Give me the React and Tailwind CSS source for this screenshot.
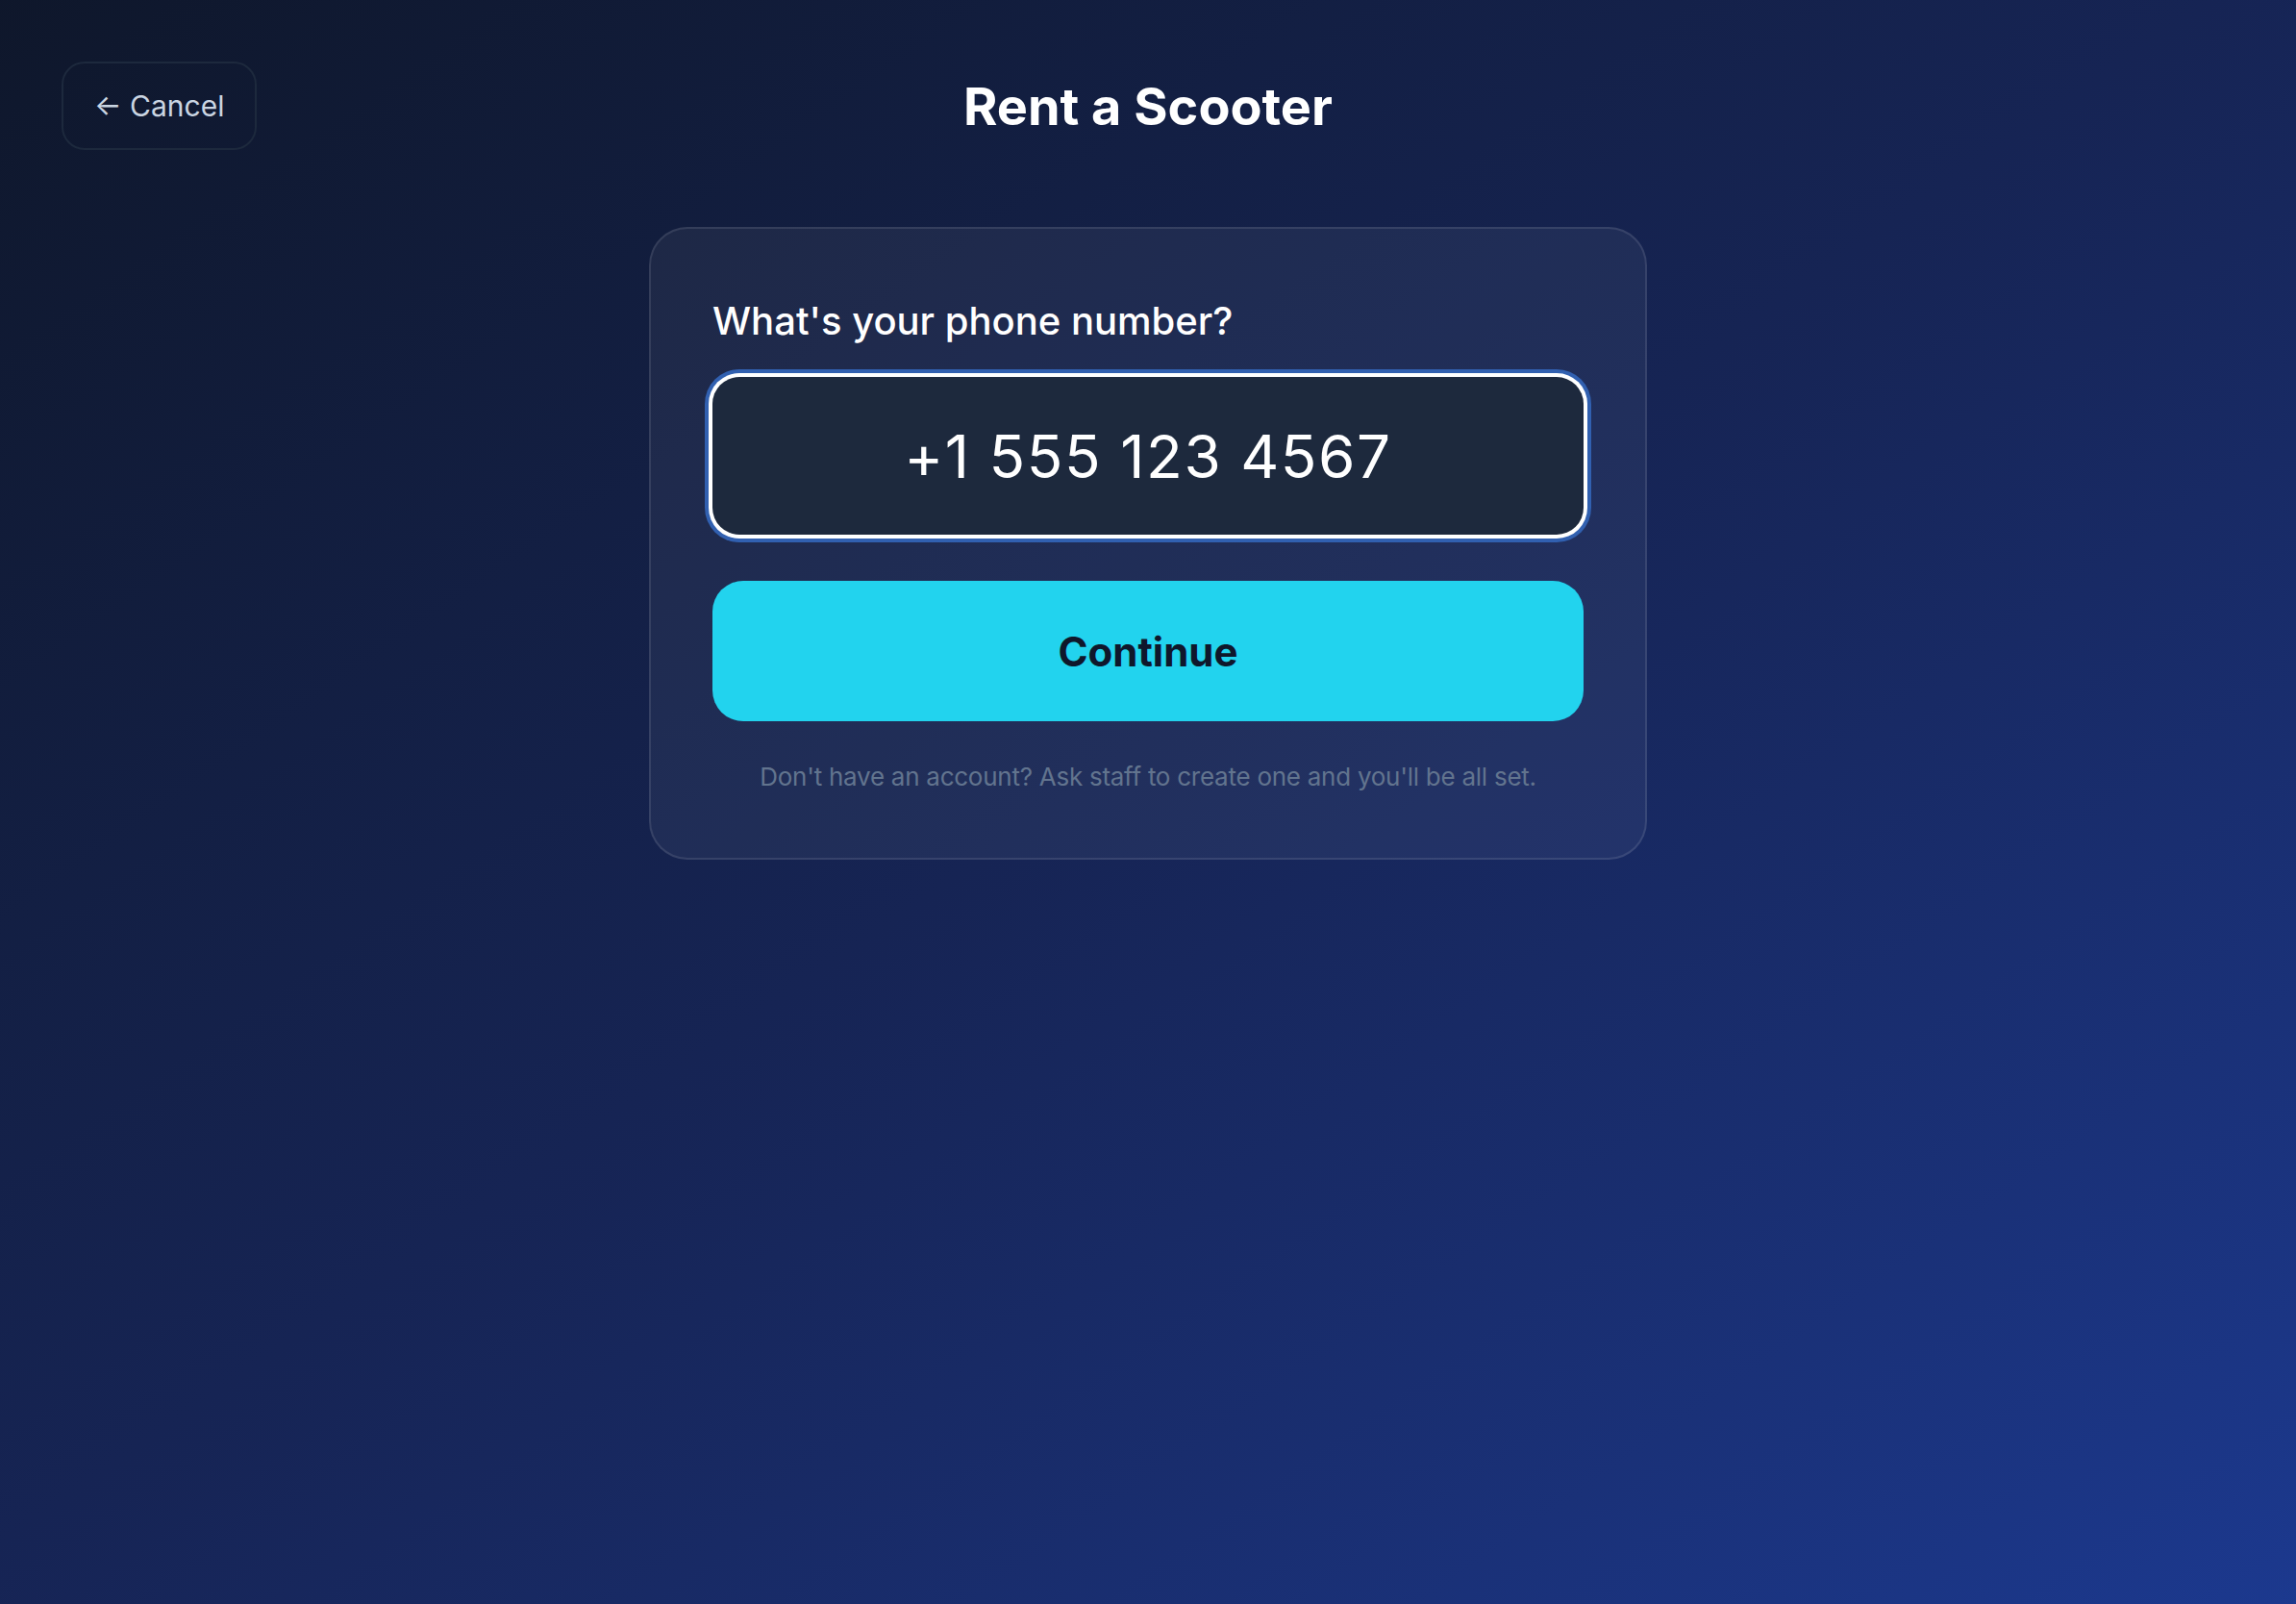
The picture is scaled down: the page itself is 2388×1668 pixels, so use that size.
import React from "react";

const App = () => {
  return (
    <div className="min-h-screen bg-linear-to-br from-slate-900 via-blue-950 to-blue-900 font-['Inter','Noto_Sans',sans-serif]">
      <header className="grid grid-cols-[1fr_auto_1fr] items-center px-16 pt-16">
        <button className="justify-self-start flex h-[92px] items-center rounded-3xl border-2 border-slate-800 px-8 text-[30px] text-slate-300">
          ← Cancel
        </button>
        <h1 className="text-[54px] font-bold text-white">Rent a Scooter</h1>
        <div />
      </header>

      <main className="mx-auto mt-[80px] w-[1038px] rounded-[40px] border-2 border-white/10 bg-white/5 p-16">
        <label className="block text-[40px] leading-[64px] font-medium text-white">
          What's your phone number?
        </label>
        <div className="mt-[26px] flex h-[164px] items-center justify-center rounded-[28px] bg-slate-800 text-[62px] tracking-wide text-white shadow-[0_0_0_4px_#ffffff,0_0_0_8px_#3160b0]">
          +1 555 123 4567
        </div>
        <button className="mt-12 h-[146px] w-full rounded-[32px] bg-[#22d3ee] text-[42px] font-bold text-slate-900">
          Continue
        </button>
        <p className="mt-[38px] text-center text-[26px] leading-10 tracking-[-0.01em] text-slate-500">
          Don't have an account? Ask staff to create one and you'll be all set.
        </p>
      </main>
    </div>
  );
};

export default App;
